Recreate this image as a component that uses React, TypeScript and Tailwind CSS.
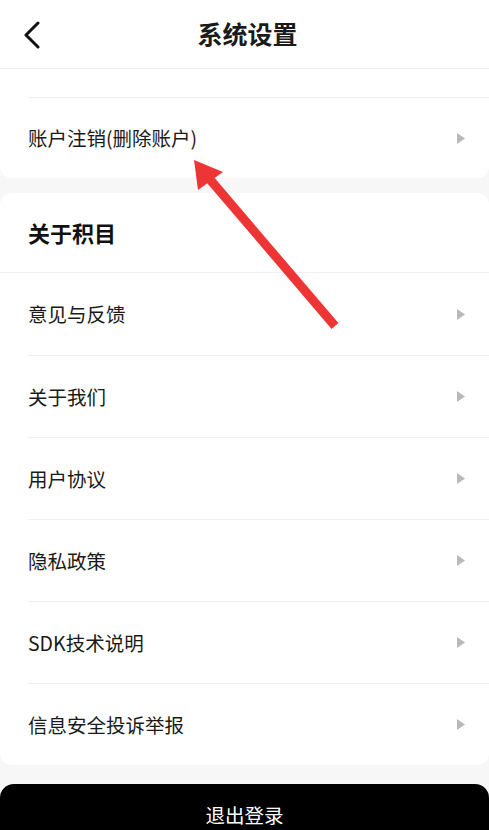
import React from 'react'

const font = { fontFamily: '"Noto Sans CJK SC", "Noto Sans", sans-serif' }

const items = ['意见与反馈', '关于我们', '用户协议', '隐私政策', 'SDK技术说明', '信息安全投诉举报']

function Caret() {
  return (
    <svg width="8" height="11" viewBox="0 0 8 11" className="shrink-0">
      <path d="M0 0 L8 5.5 L0 11 Z" fill="#b9b9b9" />
    </svg>
  )
}

function Row({ label, first }: { label: string; first?: boolean }) {
  return (
    <div className="pl-7">
      <div className={'flex h-[82px] items-center justify-between pr-[24px] ' + (first ? '' : 'border-t border-[#f0f0f0]')}>
        <span className="text-[19.5px] text-[#1a1a1a]">{label}</span>
        <Caret />
      </div>
    </div>
  )
}

export default function App() {
  return (
    <div className="relative h-[830px] w-[489px] overflow-hidden bg-[#f7f7f7]" style={font}>
      <header className="relative flex h-[69px] items-center justify-center border-b border-[#eeeeee] bg-white">
        <svg className="absolute left-[22px] top-[21px]" width="20" height="28" viewBox="0 0 20 28">
          <path d="M16 2 L4 14 L16 26" fill="none" stroke="#111" strokeWidth="3" strokeLinecap="round" strokeLinejoin="round" />
        </svg>
        <h1 className="ml-[6px] text-[25px] font-bold text-[#1a1a1a]">系统设置</h1>
      </header>

      <section className="rounded-b-[12px] bg-white">
        <div className="h-[28px]" />
        <div className="pl-7">
          <div className="flex h-[81px] items-center justify-between border-t border-[#f0f0f0] pr-[24px]">
            <span className="text-[19.5px] text-[#1a1a1a]">账户注销(删除账户)</span>
            <Caret />
          </div>
        </div>
      </section>

      <section className="mt-[15px] rounded-[12px] bg-white">
        <div className="flex h-[80px] items-center border-b border-[#f0f0f0] pl-7">
          <span className="text-[22px] font-bold text-[#111]">关于积目</span>
        </div>
        {items.map((label, i) => (
          <Row key={label} label={label} first={i === 0} />
        ))}
      </section>

      <button className="mt-[19px] flex h-[60px] w-full justify-center rounded-t-[14px] bg-black pt-[16px] text-[19.5px] text-white">
        退出登录
      </button>

      <svg className="pointer-events-none absolute left-0 top-0" width="489" height="830" viewBox="0 0 489 830">
        <line x1="335" y1="326" x2="207" y2="176" stroke="#ee3535" strokeWidth="9" strokeLinecap="butt" />
        <path d="M194 160 L223 172 L198 190 Z" fill="#ee3535" />
      </svg>
    </div>
  )
}
